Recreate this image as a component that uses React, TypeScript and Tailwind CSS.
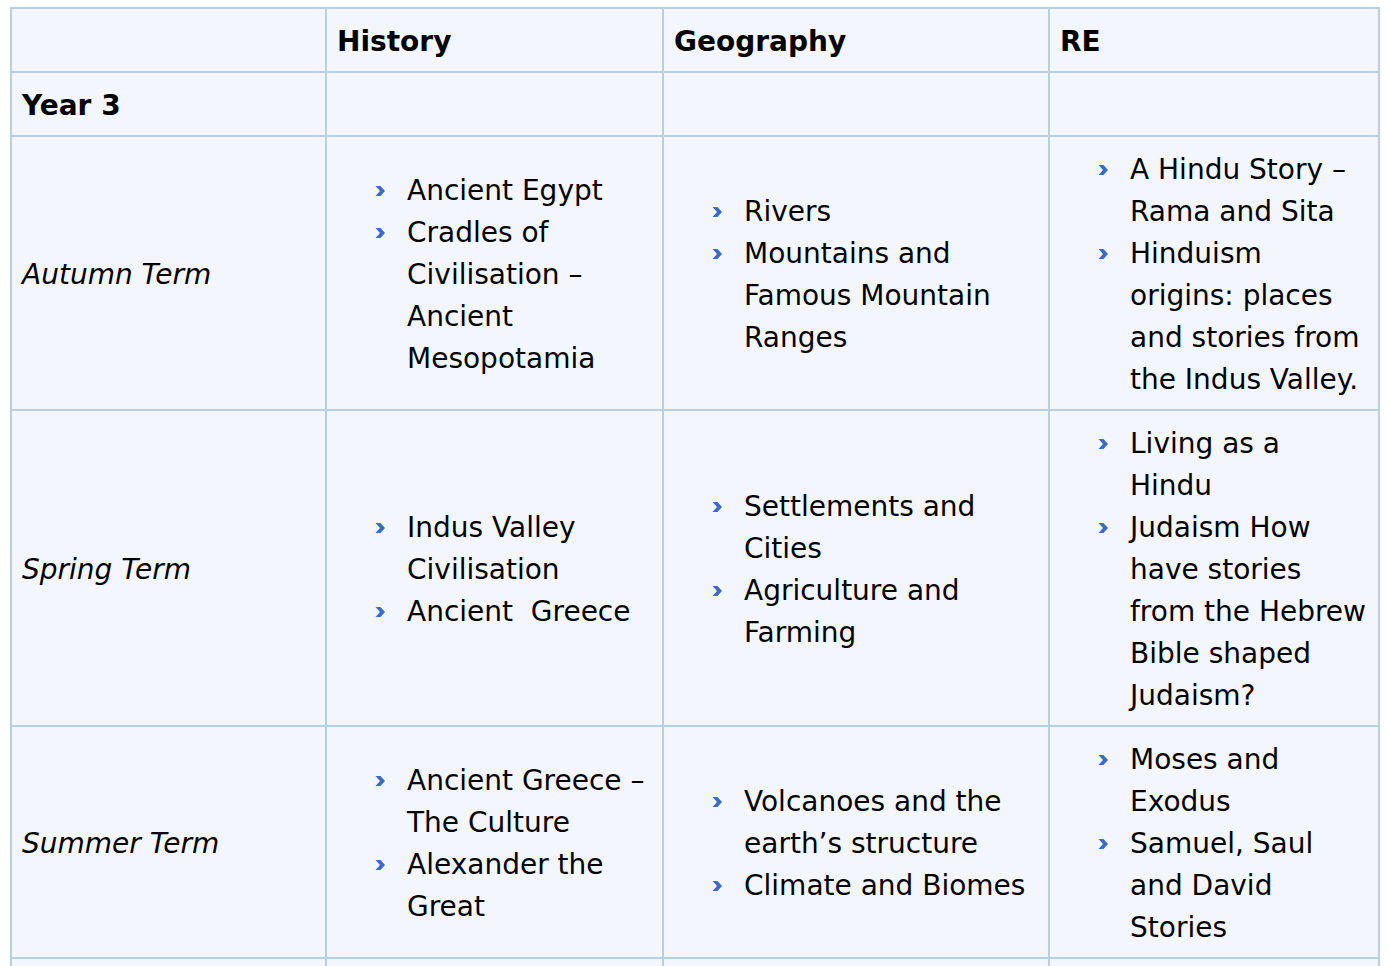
import React from "react";

const Chevron = () => (
  <svg
    width="11"
    height="12"
    viewBox="0 0 11 12"
    className="absolute left-[-32px] top-[15px]"
    aria-hidden="true"
  >
    <path d="M0.5 1 L5.5 1 L10 6 L5.5 11 L0.5 11 L5 6 Z" fill="#3a6cc4" />
  </svg>
);

const List = ({ items }: { items: React.ReactNode[] }) => (
  <ul className="pl-[70px] m-0 list-none">
    {items.map((it, i) => (
      <li key={i} className="relative">
        <Chevron />
        {it}
      </li>
    ))}
  </ul>
);

const Cell = ({
  children,
  className = "",
}: {
  children?: React.ReactNode;
  className?: string;
}) => (
  <div
    className={`border-r-2 border-b-2 border-[#b9d0e3] bg-[#f3f7fd] px-[10px] pt-[12px] pb-[8px] flex items-center ${className}`}
  >
    <div className="w-full">{children}</div>
  </div>
);

export default function App() {
  const rows: {
    term: string;
    history: React.ReactNode[];
    geo: React.ReactNode[];
    re: React.ReactNode[];
  }[] = [
    {
      term: "Autumn Term",
      history: [
        "Ancient Egypt",
        "Cradles of Civilisation – Ancient Mesopotamia",
      ],
      geo: ["Rivers", "Mountains and Famous Mountain Ranges"],
      re: [
        "A Hindu Story – Rama and Sita",
        "Hinduism origins: places and stories from the Indus Valley.",
      ],
    },
    {
      term: "Spring Term",
      history: ["Indus Valley Civilisation", "Ancient\u00a0 Greece"],
      geo: ["Settlements and Cities", "Agriculture and Farming"],
      re: [
        "Living as a Hindu",
        "Judaism How have stories from the Hebrew Bible shaped Judaism?",
      ],
    },
    {
      term: "Summer Term",
      history: ["Ancient Greece – The Culture", "Alexander the Great"],
      geo: ["Volcanoes and the earth’s structure", "Climate and Biomes"],
      re: ["Moses and Exodus", "Samuel, Saul and David Stories"],
    },
  ];

  return (
    <div className="bg-white h-[966px] overflow-hidden pl-[10px] pt-[7px] text-black font-['DejaVu_Sans',Verdana,sans-serif] text-[28px] leading-[42px]">
      <div className="grid grid-cols-[315px_337px_386px_330px] w-[1370px] border-l-2 border-t-2 border-[#b9d0e3]">
        <Cell />
        <Cell className="font-bold">History</Cell>
        <Cell className="font-bold">Geography</Cell>
        <Cell className="font-bold">RE</Cell>

        <Cell className="font-bold">Year 3</Cell>
        <Cell />
        <Cell />
        <Cell />

        {rows.map((r) => (
          <React.Fragment key={r.term}>
            <Cell className="italic">{r.term}</Cell>
            <Cell>
              <List items={r.history} />
            </Cell>
            <Cell>
              <List items={r.geo} />
            </Cell>
            <Cell>
              <List items={r.re} />
            </Cell>
          </React.Fragment>
        ))}

        <Cell className="h-[62px]" />
        <Cell className="h-[62px]" />
        <Cell className="h-[62px]" />
        <Cell className="h-[62px]" />
      </div>
    </div>
  );
}
